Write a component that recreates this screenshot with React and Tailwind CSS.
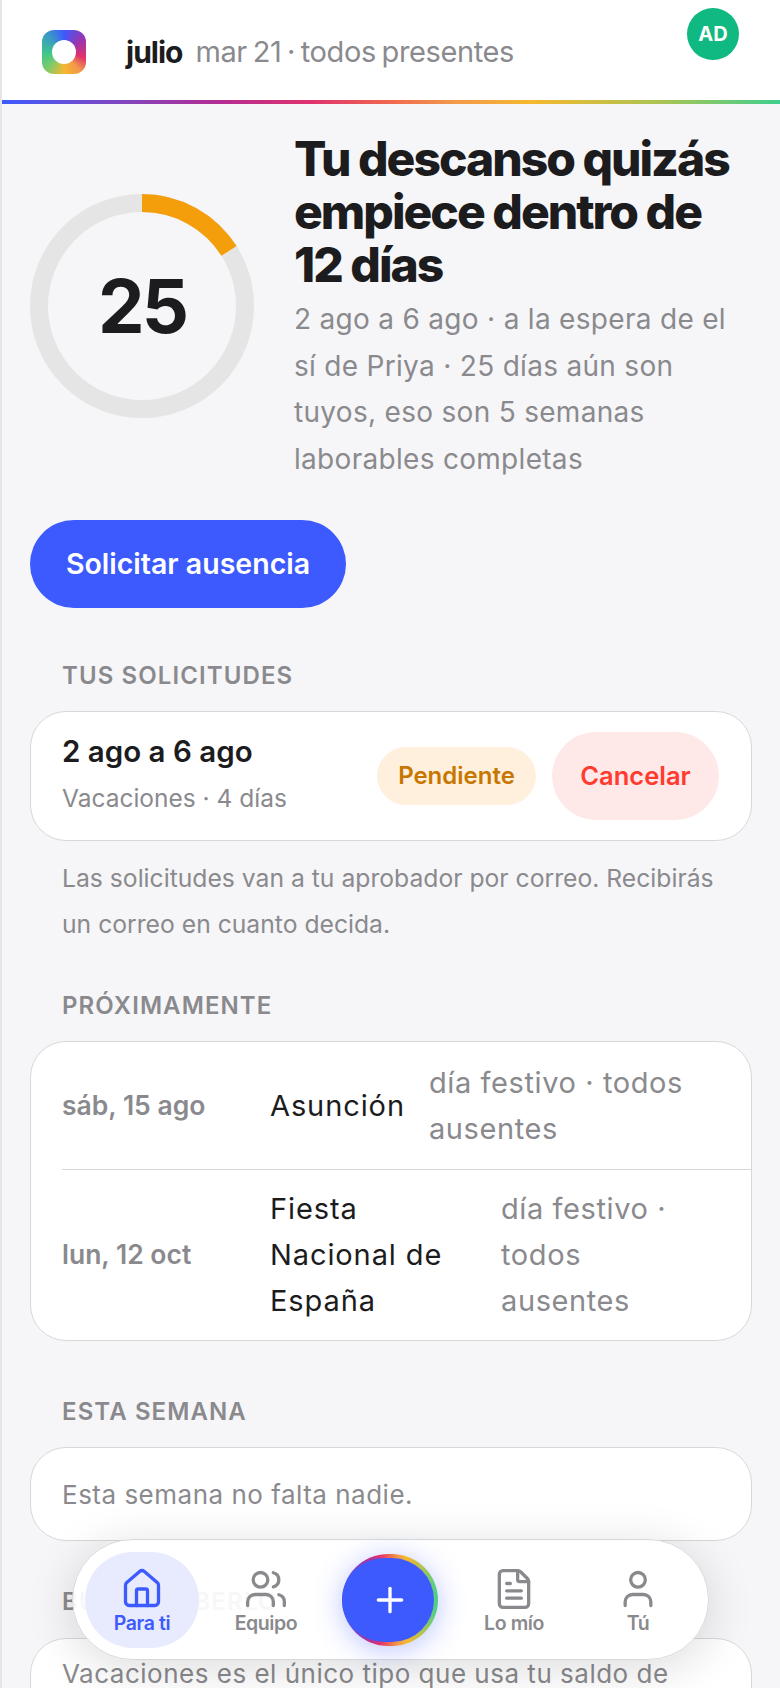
import { House, Users, FileText, User, Plus } from 'lucide-react'

const RAINBOW = 'linear-gradient(90deg, #3d5afe, #7f46c0 15%, #b32d92 28%, #e0336c 40%, #f0694f 50%, #f2994a 58%, #f5b82e 68%, #a8c455 85%, #3fcf8e 100%)'

function SectionLabel({ children }) {
  return (
    <h2 className="px-[60px] text-[24px] leading-[32px] font-semibold tracking-[1.1px] text-[#8a8a8e] uppercase">
      {children}
    </h2>
  )
}

function Card({ className = '', children }) {
  return (
    <div className={`mx-[28px] rounded-[36px] border border-[#d8d8da] bg-white ${className}`}>{children}</div>
  )
}

function Ring() {
  return (
    <svg width="224" height="224" viewBox="0 0 224 224" className="shrink-0">
      <circle cx="112" cy="112" r="103" fill="none" stroke="#e5e5e5" strokeWidth="18" />
      <circle
        cx="112"
        cy="112"
        r="103"
        fill="none"
        stroke="#f59e0b"
        strokeWidth="18"
        strokeDasharray="103.5 544"
        transform="rotate(-90 112 112)"
      />
    </svg>
  )
}

function HolidayRow({ date, name, note, nameClass = '', noteClass = '', padClass, last }) {
  return (
    <div className={`ml-[31px] flex items-center ${padClass} ${last ? '' : 'border-b border-[#d8d8da]'}`}>
      <div className="w-[208px] shrink-0 text-[26.5px] font-semibold text-[#8a8a8e]">{date}</div>
      <div className={`shrink-0 text-[29px] leading-[46px] tracking-[0.9px] text-[#1c1c1e] ${nameClass}`}>
        {name}
      </div>
      <div className={`pr-[32px] pl-[24px] text-[29px] leading-[46px] tracking-[0.6px] text-[#8a8a8e] ${noteClass}`}>
        {note}
      </div>
    </div>
  )
}

function Tab({ icon: Icon, label, active }) {
  return (
    <div className="flex w-[124px] justify-center">
      <div
        className={`flex h-[96px] w-[114px] flex-col items-center rounded-[48px] pt-[15px] ${
          active ? 'bg-[#e8ebfd] text-[#3d5afe]' : 'text-[#8a8a8e]'
        }`}
      >
        <Icon size={44} strokeWidth={1.8} />
        <span className="text-[19.5px] leading-[24px] font-semibold tracking-[-0.4px]">{label}</span>
      </div>
    </div>
  )
}

export default function App() {
  return (
    <div
      className="relative h-[1688px] w-[780px] overflow-hidden border-l-2 border-[#e5e5e5] bg-[#f6f6f8]"
      style={{ fontFamily: 'Inter, sans-serif' }}
    >
      <header className="relative h-[100px] bg-white">
        <div className="flex h-[100px] items-center pt-[4px] pl-[40px]">
          <div
            className="flex h-[44px] w-[44px] items-center justify-center rounded-[12px]"
            style={{ background: 'conic-gradient(#3d5afe, #a233a8 60deg, #e0336c 105deg, #f2994a 140deg, #f5b82e 180deg, #7dcb6a 225deg, #3fc78a 265deg, #3a9bc4 315deg, #3d5afe)' }}
          >
            <div className="h-[24px] w-[24px] rounded-full bg-white" />
          </div>
          <div className="ml-[40px] text-[30px] font-bold tracking-[-1px] text-[#1c1c1e]">julio</div>
          <div className="ml-[13px] text-[29px] font-normal tracking-[-0.4px] text-[#8a8a8e] [word-spacing:-2px]">
            mar 21 · todos presentes
          </div>
        </div>
        <div className="absolute top-[8px] right-[41px] flex h-[52px] w-[52px] items-center justify-center rounded-full bg-[#10b981] text-[20px] font-bold text-white">
          AD
        </div>
      </header>
      <div className="h-[4px]" style={{ background: RAINBOW }} />

      <section className="flex pt-[29px] pl-[28px]">
        <div className="relative mt-[61px] h-[224px] w-[224px] shrink-0">
          <Ring />
          <div className="absolute inset-0 flex items-center justify-center text-[74px] font-bold tracking-[-3px] text-[#1c1c1e]">
            25
          </div>
        </div>
        <div className="ml-[40px] min-w-0 pr-[40px]">
          <h1 className="text-[48px] leading-[52.8px] font-extrabold tracking-[-2px] text-[#1c1c1e]">
            Tu descanso quizás empiece dentro de 12 días
          </h1>
          <p className="mt-[5px] text-[28px] leading-[46.4px] tracking-[0.3px] text-[#8a8a8e]">
            2 ago a 6 ago · a la espera de el sí de Priya · 25 días aún son tuyos, eso son 5 semanas laborables completas
          </p>
        </div>
      </section>

      <button className="mt-[38px] ml-[28px] flex h-[88px] w-[316px] items-center justify-center rounded-[44px] bg-[#3d5afe] text-[28.5px] font-semibold text-white">
        Solicitar ausencia
      </button>

      <div className="mt-[52px]">
        <SectionLabel>Tus solicitudes</SectionLabel>
      </div>
      <Card className="mt-[19px] flex h-[130px] items-center justify-between pr-[32px] pl-[31px]">
        <div className="mb-[6px]">
          <div className="text-[29.5px] leading-[40px] font-semibold text-[#1c1c1e]">2 ago a 6 ago</div>
          <div className="mt-[9px] text-[24.5px] leading-[36px] text-[#8a8a8e]">Vacaciones · 4 días</div>
        </div>
        <div className="flex items-center gap-[16px]">
          <div className="flex h-[58px] w-[159px] items-center justify-center rounded-[29px] bg-[#fff0de] text-[24px] font-semibold text-[#c77700]">
            Pendiente
          </div>
          <div className="flex h-[88px] w-[167px] items-center justify-center rounded-[44px] bg-[#ffe9e8] text-[25.5px] font-semibold text-[#ff3b30]">
            Cancelar
          </div>
        </div>
      </Card>
      <p className="mt-[14px] px-[60px] text-[24.7px] leading-[46px] text-[#8a8a8e]">
        Las solicitudes van a tu aprobador por correo. Recibirás un correo en cuanto decida.
      </p>

      <div className="mt-[43px]">
        <SectionLabel>Próximamente</SectionLabel>
      </div>
      <Card className="mt-[19px]">
        <HolidayRow
          date="sáb, 15 ago"
          name="Asunción"
          note="día festivo · todos ausentes"
          padClass="py-[17.5px]"
        />
        <HolidayRow
          date="lun, 12 oct"
          name={<>Fiesta<br />Nacional de<br />España</>}
          note="día festivo · todos ausentes"
          nameClass="w-[207px]"
          noteClass="w-[230px]"
          padClass="py-[16px]"
          last
        />
      </Card>

      <div className="mt-[55px]">
        <SectionLabel>Esta semana</SectionLabel>
      </div>
      <Card className="mt-[19px] flex h-[94px] items-center px-[31px] text-[26px] tracking-[0.5px] text-[#8a8a8e]">
        Esta semana no falta nadie.
      </Card>

      <div className="mt-[45px]">
        <SectionLabel>Bueno saberlo</SectionLabel>
      </div>
      <Card className="mt-[20px] h-[120px] px-[31px] py-[12px] text-[26px] leading-[46px] tracking-[0.5px] whitespace-nowrap text-[#8a8a8e]">
        Vacaciones es el único tipo que usa tu saldo de
      </Card>

      <nav className="absolute top-[1539px] left-[70px] flex h-[121px] w-[637px] items-center rounded-[61px] border border-[#d8d8da] bg-white/93 px-[7px] shadow-[0_8px_48px_rgba(0,0,0,0.14)]">
        <Tab icon={House} label="Para ti" active />
        <Tab icon={Users} label="Equipo" />
        <div className="flex w-[124px] shrink-0 justify-center">
          <div
            className="flex h-[92px] w-[96px] items-center rounded-full shadow-[0_4px_28px_rgba(61,90,254,0.35)]"
            style={{ background: RAINBOW }}
          >
            <div className="flex h-[84px] w-[92px] items-center justify-center rounded-full bg-[#3d5afe]">
              <Plus size={40} strokeWidth={2} className="ml-[4px] text-white" />
            </div>
          </div>
        </div>
        <Tab icon={FileText} label="Lo mío" />
        <Tab icon={User} label="Tú" />
      </nav>
    </div>
  )
}
